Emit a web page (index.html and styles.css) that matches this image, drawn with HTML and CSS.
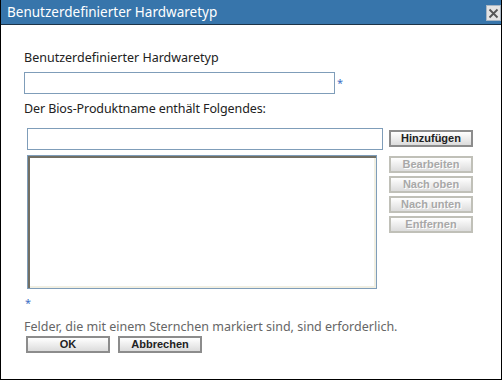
FILE: index.html
```html
<!DOCTYPE html>
<html lang="de">
<head>
    <meta charset="UTF-8">
    <title>Benutzerdefinierter Hardwaretyp</title>
    <link rel="stylesheet" href="styles.css">
</head>
<body>
    <div class="dialog">
        <div class="titlebar">
            <span class="title">Benutzerdefinierter Hardwaretyp</span>
            <span class="close">
                <svg width="11" height="11" viewBox="0 0 11 11">
                    <path d="M1.5 1.5 L9.5 9.5 M9.5 1.5 L1.5 9.5" stroke="#555" stroke-width="1.8" fill="none"/>
                </svg>
            </span>
        </div>

        <div class="content">
            <div class="label">Benutzerdefinierter Hardwaretyp</div>
            <div class="field-row">
                <input type="text" class="text-input name-input">
                <span class="req">*</span>
            </div>

            <div class="label label-bios">Der Bios-Produktname enthält Folgendes:</div>

            <div class="list-area">
                <div class="list-left">
                    <input type="text" class="text-input bios-input">
                    <div class="listbox"></div>
                </div>
                <div class="list-buttons">
                    <button class="btn btn-add">Hinzufügen</button>
                    <button class="btn" disabled>Bearbeiten</button>
                    <button class="btn" disabled>Nach oben</button>
                    <button class="btn" disabled>Nach unten</button>
                    <button class="btn" disabled>Entfernen</button>
                </div>
            </div>

            <div class="req req-note">*</div>

            <p class="hint">Felder, die mit einem Sternchen markiert sind, sind erforderlich.</p>

            <div class="actions">
                <button class="btn btn-wide">OK</button>
                <button class="btn btn-wide">Abbrechen</button>
            </div>
        </div>
    </div>
</body>
</html>
```

FILE: styles.css
```css
body {
    margin: 0;
    padding: 0;
    background-color: #fff;
    font-family: 'Noto Sans', 'Open Sans', sans-serif;
}

.dialog {
    width: 502px;
    height: 380px;
    box-sizing: border-box;
    border: 1px solid #000;
    border-top: none;
    background-color: #fff;
}

.titlebar {
    height: 24px;
    background-color: #3775ab;
    border-bottom: 1px solid #1d3347;
    display: flex;
    align-items: center;
    justify-content: space-between;
    padding: 0 0 0 6px;
}

.title {
    color: #fff;
    font-size: 13.5px;
}

.close {
    width: 15px;
    height: 16px;
    box-sizing: border-box;
    background-color: #e4e4e4;
    border: 1px solid #a9b6c3;
    display: flex;
    align-items: center;
    justify-content: center;
    margin-top: 2px;
}

.content {
    padding: 25px 0 0 23px;
}

.label {
    font-size: 12.5px;
    line-height: 16px;
    color: #222;
}

.field-row {
    display: flex;
    align-items: flex-start;
    margin-top: 6px;
}

.text-input {
    box-sizing: border-box;
    height: 22px;
    border: 1px solid #7f9db9;
    margin: 0;
    padding: 0 3px;
    background-color: #fff;
}

.name-input {
    width: 311px;
}

.req {
    color: #3b6fc4;
    font-size: 11px;
    line-height: 11px;
    margin: 5px 0 0 2px;
}

.label-bios {
    margin-top: 7px;
    letter-spacing: -0.1px;
}

.list-area {
    display: flex;
    margin-top: 11px;
    padding-left: 3px;
}

.list-left {
    display: flex;
    flex-direction: column;
    gap: 5px;
}

.bios-input {
    width: 356px;
}

.listbox {
    width: 350px;
    height: 134px;
    box-sizing: border-box;
    border: 1px solid #7f9db9;
    box-shadow: inset 2px 2px 0 #716f64, inset -2px -2px 0 #f1efe2;
}

.list-buttons {
    display: flex;
    flex-direction: column;
    gap: 3px;
    margin-left: 6px;
    padding-top: 2px;
}

.btn {
    width: 84px;
    height: 17px;
    box-sizing: border-box;
    border: 2px solid #8c8c8c;
    background: linear-gradient(#ffffff, #dcdcdc);
    font-family: 'Liberation Sans', Arial, sans-serif;
    font-weight: bold;
    font-size: 11px;
    color: #222;
    padding: 0;
    margin: 0;
    line-height: 13px;
}

.btn-add {
    margin-bottom: 6px;
}

.btn:disabled {
    border-color: #c0c0b8;
    color: #a8a8a8;
    text-shadow: 1px 1px 0 #fff;
}

.req-note {
    margin: 8px 0 0 1px;
}

.hint {
    margin: 11px 0 0 0;
    font-size: 12.5px;
    line-height: 16px;
    color: #666;
}

.actions {
    display: flex;
    gap: 8px;
    margin: 1px 0 0 2px;
}
```
